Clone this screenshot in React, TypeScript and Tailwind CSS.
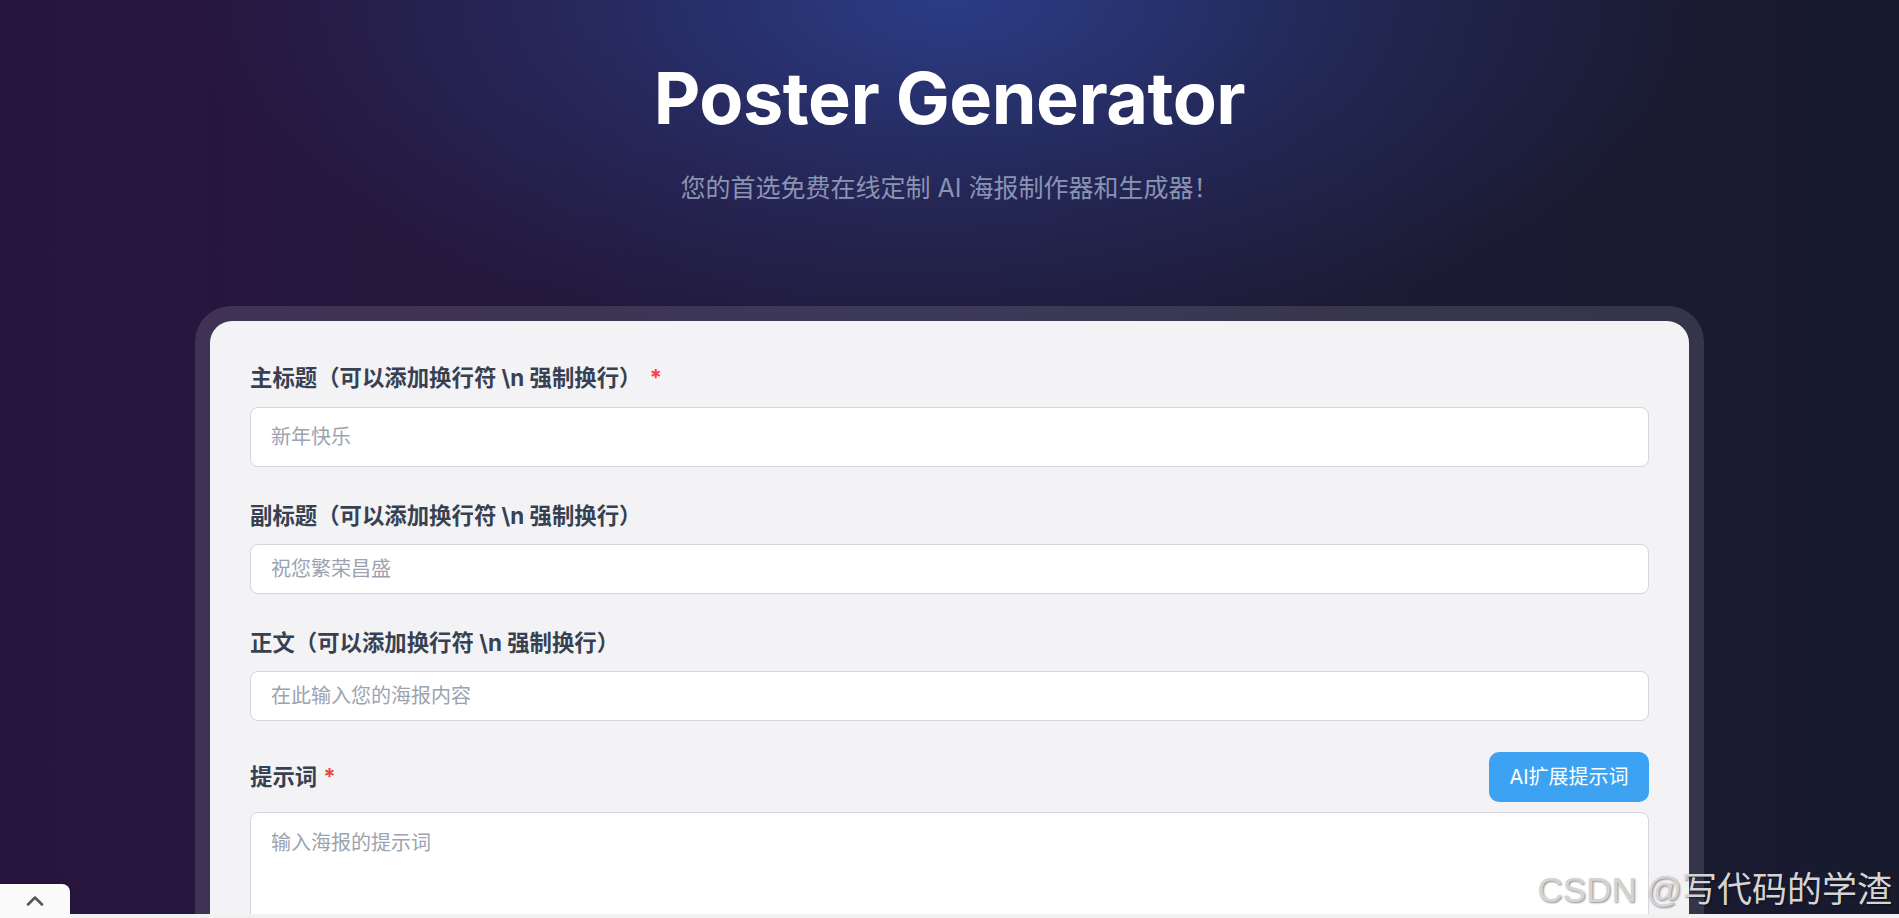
import { ChevronUp } from "lucide-react";

const font = "font-['Inter','Noto_Sans_CJK_SC',sans-serif]";

function Label({ text, star, starGap }: { text: string; star?: boolean; starGap?: string }) {
  return (
    <label className="block text-[22.4px] leading-[34px] font-bold text-[#374151]">
      {text}
      {star && <span className={`text-[#ef4444] ${starGap}`}>*</span>}
    </label>
  );
}

export default function App() {
  return (
    <div
      className={`relative h-screen overflow-hidden ${font} bg-[radial-gradient(ellipse_760px_360px_at_50%_0%,rgba(44,62,138,0.95),rgba(44,62,138,0.35)_55%,transparent_100%),linear-gradient(to_right,#28153f,#211a3a_45%,#181a2e)]`}
    >
      <header className="pt-[62px] text-center">
        <h1 className="text-[72px] leading-none font-bold tracking-[-0.5px] text-white">Poster Generator</h1>
        <p className="mt-[38px] text-[25px] leading-[32px] text-[#8a93b3]">
          您的首选免费在线定制 AI 海报制作器和生成器！
        </p>
      </header>

      <div className="mx-auto mt-[102px] w-[1509px] rounded-[36px] bg-white/[0.12] p-[15px]">
        <form className="rounded-[22px] bg-[#f3f3f6] px-10 pt-10 pb-10">
          <Label text={"主标题（可以添加换行符 \\n 强制换行）"} star starGap="ml-[8px]" />
          <input
            className="mt-3 h-[60px] w-full rounded-lg border border-[#d4d6dc] bg-white px-5 text-xl text-[#374151] outline-none placeholder:text-[#9ca3af]"
            placeholder="新年快乐"
          />

          <div className="mt-8">
            <Label text={"副标题（可以添加换行符 \\n 强制换行）"} />
            <input
              className="mt-[11px] h-[50px] w-full rounded-lg border border-[#d4d6dc] bg-white px-5 text-xl text-[#374151] outline-none placeholder:text-[#9ca3af]"
              placeholder="祝您繁荣昌盛"
            />
          </div>

          <div className="mt-8">
            <Label text={"正文（可以添加换行符 \\n 强制换行）"} />
            <input
              className="mt-[11px] h-[50px] w-full rounded-lg border border-[#d4d6dc] bg-white px-5 text-xl text-[#374151] outline-none placeholder:text-[#9ca3af]"
              placeholder="在此输入您的海报内容"
            />
          </div>

          <div className="mt-[31px] flex h-[50px] items-center justify-between">
            <Label text="提示词" star starGap="ml-[6px]" />
            <button
              type="button"
              className="h-[50px] w-[160px] rounded-[10px] bg-[#3ea2f2] text-xl font-normal text-white"
            >
              AI扩展提示词
            </button>
          </div>
          <textarea
            className="mt-[10px] block h-[220px] w-full resize-none rounded-lg border border-[#d4d6dc] bg-white px-5 pt-4 text-xl leading-7 text-[#374151] outline-none placeholder:text-[#9ca3af]"
            placeholder="输入海报的提示词"
          />
        </form>
      </div>

      <button className="absolute bottom-0 left-0 flex h-[34px] w-[70px] items-center justify-center rounded-tr-lg bg-[#fafafa] shadow-[0_0_4px_rgba(0,0,0,0.25)]">
        <ChevronUp size={28} strokeWidth={2.2} className="text-[#555555]" />
      </button>

      <div className="absolute right-0 bottom-0 left-[70px] h-[4px] bg-[#f1f1f1]" />

      <div className="absolute right-[7px] bottom-[11px] font-['Liberation_Sans','Noto_Sans_CJK_SC',sans-serif] text-[35px] leading-none text-[#d4d4d4] [text-shadow:1px_1px_2px_rgba(0,0,0,0.45)]">
        CSDN @写代码的学渣
      </div>
    </div>
  );
}
